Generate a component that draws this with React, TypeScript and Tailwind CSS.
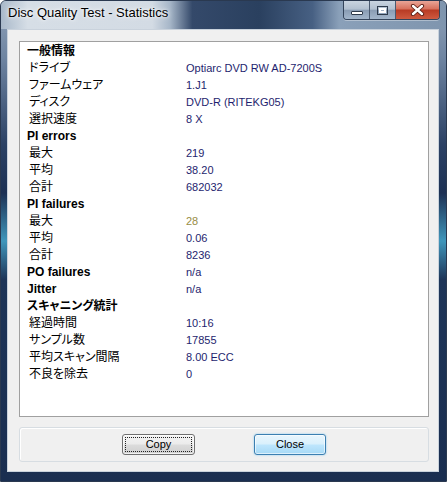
import React from 'react';

type Row = { label: string; value?: string; head?: boolean; olive?: boolean };

const ROWS: Row[] = [
  { label: '一般情報', head: true },
  { label: 'ドライブ', value: 'Optiarc DVD RW AD-7200S' },
  { label: 'ファームウェア', value: '1.J1' },
  { label: 'ディスク', value: 'DVD-R (RITEKG05)' },
  { label: '選択速度', value: '8 X' },
  { label: 'PI errors', head: true },
  { label: '最大', value: '219' },
  { label: '平均', value: '38.20' },
  { label: '合計', value: '682032' },
  { label: 'PI failures', head: true },
  { label: '最大', value: '28', olive: true },
  { label: '平均', value: '0.06' },
  { label: '合計', value: '8236' },
  { label: 'PO failures', value: 'n/a', head: true },
  { label: 'Jitter', value: 'n/a', head: true },
  { label: 'スキャニング統計', head: true },
  { label: '経過時間', value: '10:16' },
  { label: 'サンプル数', value: '17855' },
  { label: '平均スキャン間隔', value: '8.00 ECC' },
  { label: '不良を除去', value: '0' },
];

function CaptionButtons() {
  return (
    <div className="ml-auto mr-[6px] flex h-[19px] self-start overflow-hidden rounded-b-[4px] border border-t-0 border-[#34445a] shadow-[0_1px_0_rgba(255,255,255,0.35)]">
      <div className="flex w-[26px] items-end justify-center border-r border-[#4a5a70] bg-[linear-gradient(180deg,#c9d4e0_0%,#b2c0d0_45%,#8a9db4_52%,#a3b6cb_100%)] pb-[4px]">
        <div className="h-[4px] w-[12px] rounded-[1px] border border-[#2d3a4b] bg-white" />
      </div>
      <div className="flex w-[26px] items-center justify-center border-r border-[#4a5a70] bg-[linear-gradient(180deg,#c9d4e0_0%,#b2c0d0_45%,#8a9db4_52%,#a3b6cb_100%)]">
        <div className="h-[9px] w-[11px] border border-[#2d3a4b] bg-transparent p-[1px]">
          <div className="h-full w-full border-[2px] border-white bg-[#9fb0c4]" />
        </div>
      </div>
      <div className="flex w-[43px] items-center justify-center bg-[linear-gradient(180deg,#e9a597_0%,#d8735f_42%,#b93c25_52%,#cf5a40_100%)]">
        <svg width="15" height="12" viewBox="0 0 15 12">
          <path d="M3 2 L12 10 M12 2 L3 10" stroke="#5b1e14" strokeWidth="4.2" strokeLinecap="round" />
          <path d="M3 2 L12 10 M12 2 L3 10" stroke="#ffffff" strokeWidth="2.4" strokeLinecap="round" />
        </svg>
      </div>
    </div>
  );
}

export default function App() {
  return (
    <div className="flex h-[482px] w-[447px] flex-col overflow-hidden rounded-t-[6px] border border-[#2a3950] bg-[linear-gradient(180deg,#92a4ba_0%,#6e84a1_12%,#2b4164_30%,#1d3154_40%,#3f96bb_50%,#1e3558_58%,#1a2e50_100%)]">
      {/* title bar */}
      <div className="flex h-[28px] shrink-0 bg-[linear-gradient(90deg,#a9b9ca_0%,#d6dee6_6%,#d3dbe4_34%,#a6b6c8_38%,#34496a_43%,#2a405f_58%,#476083_70%,#8aa0b9_76%,#7f95ae_100%)]">
        <div className="pl-[7px] pt-[4px] font-['Liberation_Sans',sans-serif] text-[13px] leading-[15px] text-black [text-shadow:0_0_6px_#ffffff,0_0_3px_#ffffff]">
          Disc Quality Test - Statistics
        </div>
        <CaptionButtons />
      </div>

      {/* client area */}
      <div className="ml-[6px] mr-[7px] flex h-[443px] flex-col border border-[#c9d2dc] bg-[#f0f0f0] pb-[9px] pl-[11px] pr-[9px] pt-[11px]">
        <div className="h-[376px] border border-[#a0a0a0] bg-white pl-[7px] pt-[1px]">
          {ROWS.map((r, i) => (
            <div key={i} className="grid h-[17px] grid-cols-[159px_1fr] items-center leading-[17px]">
              <div
                className={`font-['Liberation_Sans','Noto_Sans_CJK_JP',sans-serif] text-[12px] text-black [font-feature-settings:'palt'] ${
                  r.head ? 'font-bold' : 'pl-[2px]'
                }`}
              >
                {r.label}
              </div>
              <div
                className={`font-['Liberation_Sans',sans-serif] text-[11px] ${
                  r.olive ? 'text-[#978d44]' : 'text-[#1e1e6e]'
                }`}
              >
                {r.value ?? ''}
              </div>
            </div>
          ))}
        </div>

        <div className="mt-[10px] flex h-[35px] items-center justify-center gap-[59px] rounded-[3px] border border-[#d7dde2] shadow-[inset_1px_1px_0_#ffffff]">
          <button className="flex h-[21px] w-[73px] items-center justify-center rounded-[3px] border border-[#707070] bg-[linear-gradient(180deg,#f4f4f4_0%,#ebebeb_48%,#dcdcdc_52%,#cfcfcf_100%)] p-[2px] font-['Liberation_Sans',sans-serif] text-[11px] text-black shadow-[inset_0_0_0_1px_rgba(255,255,255,0.7)]">
            <span className="flex h-full w-full items-center justify-center border border-dotted border-[#202020]">
              Copy
            </span>
          </button>
          <button className="flex h-[21px] w-[72px] items-center justify-center rounded-[3px] border border-[#3c7fb1] bg-[linear-gradient(180deg,#eaf6fd_0%,#d9f0fc_48%,#bee6fd_52%,#a7d9f5_100%)] font-['Liberation_Sans',sans-serif] text-[11px] text-black shadow-[0_0_2px_#7fc6ee,inset_0_0_0_1px_rgba(255,255,255,0.6)]">
            Close
          </button>
        </div>
      </div>
    </div>
  );
}
